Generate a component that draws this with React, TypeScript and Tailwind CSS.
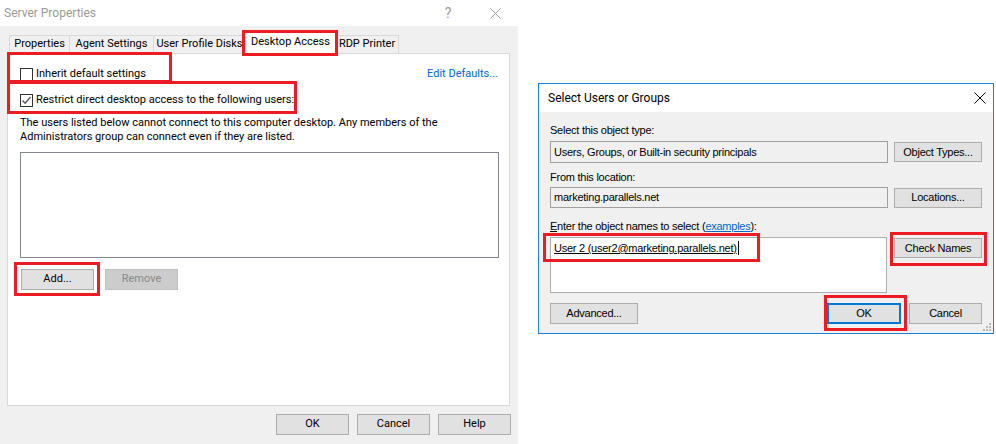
import React from "react";

const seg = "font-['Roboto',sans-serif] text-[11px]";
const ms = "font-['Liberation_Sans',Arial,sans-serif] text-[11px] tracking-[-0.25px]";

function Check({ checked }: { checked?: boolean }) {
  return (
    <span className="w-[13px] h-[13px] border border-[#333333] bg-white flex items-center justify-center shrink-0">
      {checked && (
        <svg width="11" height="11" viewBox="0 0 11 11">
          <path d="M1.5 5.5 L4.2 8.3 L9.5 2" fill="none" stroke="#5a5a5a" strokeWidth="1.4" />
        </svg>
      )}
    </span>
  );
}

function CloseX({ color, size }: { color: string; size: number }) {
  return (
    <svg width={size} height={size} viewBox="0 0 12 12">
      <path d="M0.5 0.5 L11.5 11.5 M11.5 0.5 L0.5 11.5" stroke={color} strokeWidth="1" />
    </svg>
  );
}

function WinButton({ label, w, disabled }: { label: string; w: string; disabled?: boolean }) {
  return (
    <div
      className={`${w} h-[21px] flex items-center justify-center ${
        disabled
          ? "bg-[#cccccc] border border-[#bfbfbf] text-[#8a8a8a]"
          : "bg-[#e1e1e1] border border-[#adadad] text-black"
      }`}
    >
      {label}
    </div>
  );
}

const tabs = [
  { name: "Properties", w: "w-[61px]" },
  { name: "Agent Settings", w: "w-[85px]" },
  { name: "User Profile Disks", w: "w-[93px]" },
  { name: "Desktop Access", w: "w-[91px]", active: true },
  { name: "RDP Printer", w: "w-[64px]" },
];

function ServerProperties() {
  return (
    <div className={`w-[518px] h-[444px] flex flex-col bg-[#f0f0f0] ${seg}`}>
      <div className="h-[26px] bg-white flex items-center pl-[4px] pr-[13px]">
        <span className="text-[12px] text-[#9a9a9a]">Server Properties</span>
        <span className="ml-auto w-[20px] text-center text-[14px] text-[#9a9a9a]">?</span>
        <span className="ml-[27px] w-[20px] flex justify-center">
          <CloseX color="#9a9a9a" size={11} />
        </span>
      </div>
      <div className="flex-1 flex flex-col pl-[7px] pr-[7px]">
        <div className="h-[27px] flex items-end pl-[2px] relative z-10">
          {tabs.map((t) => (
            <div
              key={t.name}
              className={`${t.w} -mr-px whitespace-nowrap flex items-center justify-center border border-b-0 border-[#d9d9d9] ${
                t.active ? "h-[22px] bg-white -mb-px pb-[2px]" : "h-[18px] bg-[#f0f0f0]"
              }`}
            >
              {t.name}
            </div>
          ))}
        </div>
        <div className="w-[503px] h-[353px] border border-[#d9d9d9] bg-white flex flex-col pl-[12px] pr-[10px]">
          <div className="mt-[13px] h-[14px] flex items-center">
            <Check />
            <span className="ml-[3px]">Inherit default settings</span>
            <span className="ml-auto mr-[1px] text-[#0066cc]">Edit Defaults...</span>
          </div>
          <div className="mt-[12px] h-[14px] flex items-center">
            <Check checked />
            <span className="ml-[3px]">Restrict direct desktop access to the following users:</span>
          </div>
          <div className="mt-[9px] leading-[13.5px]">
            The users listed below cannot connect to this computer desktop. Any members of the
            <br />
            Administrators group can connect even if they are listed.
          </div>
          <div className="mt-[9px] w-[479px] h-[106px] border border-[#828790] bg-white" />
          <div className="mt-[11px] flex gap-[11px] pl-[1px]">
            <WinButton label="Add..." w="w-[73px]" />
            <WinButton label="Remove" w="w-[73px]" disabled />
          </div>
        </div>
        <div className="mt-[8px] flex justify-end gap-[8px]">
          <WinButton label="OK" w="w-[73px]" />
          <WinButton label="Cancel" w="w-[73px]" />
          <WinButton label="Help" w="w-[73px]" />
        </div>
      </div>
    </div>
  );
}

function SelectUsers() {
  return (
    <div className={`relative ml-[20px] mt-[83px] w-[456px] h-[251px] border border-[#1883d7] flex flex-col ${ms}`}>
      <div className="h-[28px] bg-white flex items-center pl-[9px] pr-[7px]">
        <span className="font-['Roboto',sans-serif] text-[12px] tracking-normal">Select Users or Groups</span>
        <span className="ml-auto">
          <CloseX color="#000000" size={12} />
        </span>
      </div>
      <div className="flex-1 bg-[#f0f0f0] flex flex-col pl-[11px] pr-[11px]">
        <div className="mt-[12px] h-[13px] leading-[13px]">Select this object type:</div>
        <div className="mt-[4px] flex items-center">
          <div className="w-[338px] h-[22px] border border-[#a0a0a0] pl-[3px] flex items-center">
            Users, Groups, or Built-in security principals
          </div>
          <div className="ml-auto w-[88px] h-[20px] bg-[#e1e1e1] border border-[#adadad] flex items-center justify-center">
            Object Types...
          </div>
        </div>
        <div className="mt-[8px] h-[13px] leading-[13px]">From this location:</div>
        <div className="mt-[3px] flex items-center">
          <div className="w-[338px] h-[21px] border border-[#a0a0a0] pl-[3px] flex items-center">
            marketing.parallels.net
          </div>
          <div className="ml-auto w-[88px] h-[20px] bg-[#e1e1e1] border border-[#adadad] flex items-center justify-center">
            Locations...
          </div>
        </div>
        <div className="mt-[12px] h-[13px] leading-[13px]">
          <span className="underline">E</span>nter the object names to select (
          <span className="text-[#0066cc] underline">examples</span>):
        </div>
        <div className="mt-[4px] flex items-start">
          <div className="w-[337px] h-[56px] border border-[#abadb3] bg-white pl-[3px] pt-[3px] flex">
            <span className="underline leading-[14px]">User 2 (user2@marketing.parallels.net)</span>
            <span className="ml-[1px] w-px h-[14px] bg-black" />
          </div>
          <div className="ml-auto mt-[1px] w-[88px] h-[20px] bg-[#e1e1e1] border border-[#adadad] flex items-center justify-center">
            Check Names
          </div>
        </div>
        <div className="mt-[10px] flex items-center">
          <div className="w-[88px] h-[21px] bg-[#e1e1e1] border border-[#adadad] flex items-center justify-center">
            Advanced...
          </div>
          <div className="ml-auto w-[74px] h-[21px] bg-[#e1e1e1] border-2 border-[#0078d7] flex items-center justify-center">
            OK
          </div>
          <div className="ml-[8px] w-[73px] h-[21px] bg-[#e1e1e1] border border-[#adadad] flex items-center justify-center">
            Cancel
          </div>
        </div>
      </div>
      <svg className="absolute right-[1px] bottom-[1px]" width="10" height="10" viewBox="0 0 10 10">
        {[
          [7, 1],
          [4, 4],
          [7, 4],
          [1, 7],
          [4, 7],
          [7, 7],
        ].map(([x, y]) => (
          <rect key={`${x}-${y}`} x={x} y={y} width="2" height="2" fill="#b8b8b8" />
        ))}
      </svg>
    </div>
  );
}

export default function App() {
  return (
    <div className="relative w-[996px] h-[444px] bg-white flex items-start overflow-hidden">
      <ServerProperties />
      <SelectUsers />
      {/* red annotation frames */}
      <div className="absolute left-[242px] top-[30px] w-[96px] h-[26px] border-[3px] border-[#ed1c24] z-20" />
      <div className="absolute left-[7px] top-[52px] w-[165px] h-[31px] border-[3px] border-[#ed1c24] z-20" />
      <div className="absolute left-[7px] top-[81px] w-[290px] h-[33px] border-[3px] border-[#ed1c24] z-20" />
      <div className="absolute left-[14px] top-[262px] w-[86px] h-[34px] border-[3px] border-[#ed1c24] z-20" />
      <div className="absolute left-[543px] top-[233px] w-[217px] h-[29px] border-[3px] border-[#ed1c24] z-20" />
      <div className="absolute left-[890px] top-[232px] w-[97px] h-[34px] border-[3px] border-[#ed1c24] z-20" />
      <div className="absolute left-[824px] top-[295px] w-[83px] h-[36px] border-[3px] border-[#ed1c24] z-20" />
    </div>
  );
}
